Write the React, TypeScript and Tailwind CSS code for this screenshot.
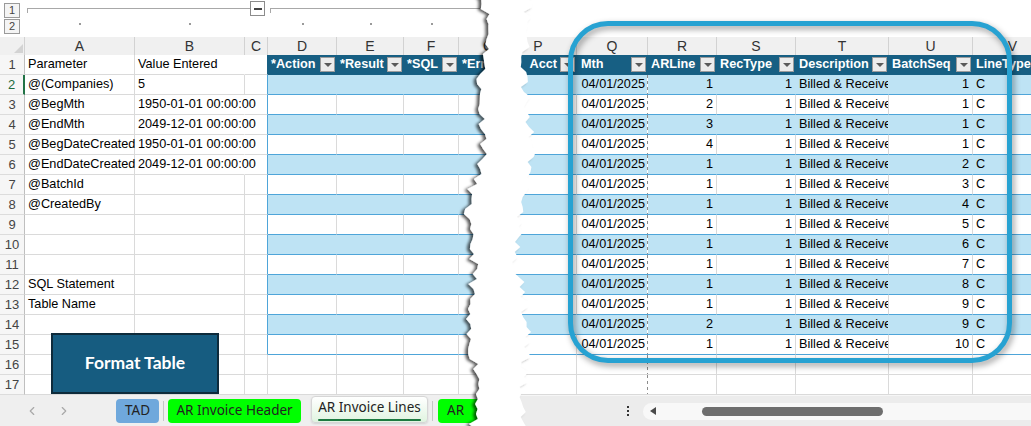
import { ChevronLeft, ChevronRight } from "lucide-react";

type Kind = "head" | "band" | "white" | "plain";

const BG: Record<Kind, string> = {
  head: "bg-[#175f83] text-white font-bold",
  band: "bg-[#bee3f4]",
  white: "bg-white",
  plain: "bg-white",
};
const BB: Record<Kind, string> = {
  head: "border-b-[#175f83]",
  band: "border-b-[#4ea5d9]",
  white: "border-b-[#4ea5d9]",
  plain: "border-b-[#dadada]",
};
const BR: Record<Kind, string> = {
  head: "border-r-[#175f83]",
  band: "border-r-[#bee3f4]",
  white: "border-r-[#dadada]",
  plain: "border-r-[#dadada]",
};

const ROWS = Array.from({ length: 17 }, (_, i) => i + 1);

function kindOf(n: number): Kind {
  if (n === 1) return "head";
  if (n > 15) return "plain";
  return n % 2 === 0 ? "band" : "white";
}

const LEFT_TEXT: Record<number, [string, string]> = {
  1: ["Parameter", "Value Entered"],
  2: ["@(Companies)", "5"],
  3: ["@BegMth", "1950-01-01 00:00:00"],
  4: ["@EndMth", "2049-12-01 00:00:00"],
  5: ["@BegDateCreated", "1950-01-01 00:00:00"],
  6: ["@EndDateCreated", "2049-12-01 00:00:00"],
  7: ["@BatchId", ""],
  8: ["@CreatedBy", ""],
  12: ["SQL Statement", ""],
  13: ["Table Name", ""],
};

const LEFT_TABLE = [
  { name: "*Action", w: "w-[69px]" },
  { name: "*Result", w: "w-[67px]" },
  { name: "*SQL", w: "w-[55px]" },
  { name: "*ErrMsg", w: "w-[60px]" },
];

// ARLine, BatchSeq for rows 2..15
const LINES: [number, number][] = [
  [1, 1], [2, 1], [3, 1], [4, 1], [1, 2], [1, 3], [1, 4],
  [1, 5], [1, 6], [1, 7], [1, 8], [1, 9], [2, 9], [1, 10],
];

// jagged torn-paper edge between the two screenshots
function rand(seed: number) {
  let s = seed;
  return () => {
    s = (s * 16807) % 2147483647;
    return s / 2147483647;
  };
}

const TEAR = (() => {
  const r = rand(11);
  const pts: string[] = [];
  for (let y = -6; y <= 432; y += 5) {
    const x = 482 - y * 0.03 + Math.sin(y / 19) * 5 + Math.sin(y / 53) * 5 + (r() - 0.5) * 9;
    pts.push(`${x.toFixed(1)},${y}`);
  }
  for (let y = 432; y >= -6; y -= 5) {
    const x = 525 + Math.sin(y / 27 + 2) * 5 + Math.sin(y / 61) * 4 + (r() - 0.5) * 11;
    pts.push(`${x.toFixed(1)},${y}`);
  }
  return pts.join(" ");
})();

function Filter() {
  return (
    <span className="mr-px w-[15px] h-[15px] shrink-0 bg-[#ececec] border border-[#9c9c9c] flex items-center justify-center">
      <span className="w-0 h-0 border-x-[4px] border-x-transparent border-t-[4px] border-t-[#5a5a5a]" />
    </span>
  );
}

function OutlineStrip() {
  const dots = ["w-[110px]", "w-[110px]", "w-[23px]", "w-[69px]", "w-[67px]", "w-[55px]", "w-[60px]"];
  return (
    <div className="h-[37px] shrink-0 flex">
      <div className="w-[25px] shrink-0 flex flex-col gap-px pt-[3px] pl-[4px]">
        {["1", "2"].map((l) => (
          <div key={l} className="w-[16px] h-[15px] border border-[#9a9a9a] bg-[#f4f4f4] text-[11px] leading-[13px] text-center text-[#444]">
            {l}
          </div>
        ))}
      </div>
      <div className="flex flex-col shrink-0">
        <div className="flex items-start pt-px h-[17px]">
          <div className="ml-[2px] mt-[7px] w-[223px] h-[5px] shrink-0 border-t border-l border-[#a8a8a8]" />
          <div className="w-[15px] h-[15px] shrink-0 border border-[#8c8c8c] flex items-center justify-center">
            <div className="w-[8px] h-[2px] bg-[#444]" />
          </div>
          <div className="ml-[5px] mt-[7px] w-[230px] h-[5px] shrink-0 border-t border-l border-[#a8a8a8]" />
        </div>
        <div className="flex mt-[6px]">
          {dots.map((w, i) => (
            <div key={i} className={`${w} shrink-0 flex justify-center`}>
              {i !== 2 && <div className="w-[2px] h-[2px] bg-[#9a9a9a]" />}
            </div>
          ))}
        </div>
      </div>
    </div>
  );
}

function LeftHeader() {
  const cols = [
    { l: "A", w: "w-[110px]" },
    { l: "B", w: "w-[110px]" },
    { l: "C", w: "w-[23px]" },
    { l: "D", w: "w-[69px]" },
    { l: "E", w: "w-[67px]" },
    { l: "F", w: "w-[55px]" },
    { l: "G", w: "w-[60px]" },
  ];
  return (
    <div className="h-[18px] shrink-0 flex bg-[#f0f0f0] text-[14px] text-[#333]">
      <div className="w-[25px] shrink-0 flex items-end justify-end pr-px pb-[2px] border-r border-[#d2d2d2]">
        <span className="w-0 h-0 border-l-[9px] border-l-transparent border-b-[9px] border-b-[#d3d3d3]" />
      </div>
      {cols.map((c) => (
        <div key={c.l} className={`${c.w} shrink-0 border-r border-[#d2d2d2] flex items-center justify-center`}>
          {c.l}
        </div>
      ))}
    </div>
  );
}

function LeftRow({ n }: { n: number }) {
  const k = kindOf(n);
  const [a, b] = LEFT_TEXT[n] ?? ["", ""];
  const long = b.length > 12;
  return (
    <div className="flex h-[20px] shrink-0 text-[12.7px] text-black">
      <div
        className={`w-[25px] shrink-0 flex items-center justify-center bg-[#f6f6f6] border-b border-b-[#dcdcdc] text-[13px] ${
          n === 2 ? "border-r-2 border-r-[#217346] text-[#1e6b3e]" : "border-r border-r-[#bfbfbf] text-[#444]"
        }`}
      >
        {n}
      </div>
      <div className="w-[110px] shrink-0 border-b border-r border-[#dadada] pl-[3px] flex items-center whitespace-nowrap">
        {a}
      </div>
      <div
        className={`w-[110px] shrink-0 border-b border-r border-b-[#dadada] ${
          long ? "border-r-transparent" : "border-r-[#dadada]"
        } pl-[3px] flex items-center whitespace-nowrap`}
      >
        {b}
      </div>
      <div
        className={`w-[23px] shrink-0 border-b border-r border-b-[#dadada] ${
          k === "plain" ? "border-r-[#dadada]" : k === "head" ? "border-r-[#175f83]" : "border-r-[#4ea5d9]"
        }`}
      />
      {LEFT_TABLE.map((c) => (
        <div
          key={c.name}
          className={`${c.w} shrink-0 border-b border-r ${BG[k]} ${BB[k]} ${BR[k]} flex items-center justify-between pl-[3px] whitespace-nowrap overflow-hidden`}
        >
          {k === "head" && (
            <>
              <span>{c.name}</span>
              <Filter />
            </>
          )}
        </div>
      ))}
    </div>
  );
}

function LeftTabs() {
  return (
    <div className="h-[31px] shrink-0 flex items-center bg-[#efefef] font-['Noto_Sans',sans-serif] text-[13.5px] text-[#222] whitespace-nowrap">
      <ChevronLeft size={14} className="ml-[25px] shrink-0 text-[#a8a8a8]" />
      <ChevronRight size={14} className="ml-[18px] shrink-0 text-[#a8a8a8]" />
      <div className="ml-[45px] w-[43px] h-[24px] shrink-0 rounded-[4px] bg-[#6fa8dc] flex items-center justify-center">TAD</div>
      <div className="ml-[4px] w-px h-[20px] shrink-0 bg-[#c6c6c6]" />
      <div className="ml-[4px] w-[133px] h-[24px] shrink-0 rounded-[4px] bg-[#00ff00] flex items-center justify-center">
        AR Invoice Header
      </div>
      <div className="ml-[10px] w-[117px] h-[27px] shrink-0 self-start mt-px rounded-[4px] border border-[#d6d6d6] bg-gradient-to-b from-white to-[#e0f4e0] flex flex-col items-center pt-[2px] shadow-[0_1px_2px_rgba(0,0,0,0.12)]">
        <span className="leading-[17px]">AR Invoice Lines</span>
        <div className="mt-[3px] w-[103px] h-[2px] rounded bg-[#1d7a40]" />
      </div>
      <div className="ml-[4px] w-px h-[20px] shrink-0 bg-[#c6c6c6]" />
      <div className="ml-[5px] w-[60px] h-[24px] shrink-0 rounded-[4px] bg-[#00ff00] flex items-center pl-[9px]">AR</div>
    </div>
  );
}

function RightHeader() {
  const cols = [
    { l: "P", w: "w-[77px]" },
    { l: "Q", w: "w-[71px]" },
    { l: "R", w: "w-[69px]" },
    { l: "S", w: "w-[79px]" },
    { l: "T", w: "w-[93px]" },
    { l: "U", w: "w-[84px]" },
    { l: "V", w: "w-[80px]" },
  ];
  return (
    <div className="h-[18px] shrink-0 flex bg-[#f0f0f0] text-[14px] text-[#333]">
      {cols.map((c) => (
        <div key={c.l} className={`${c.w} shrink-0 border-r border-[#d2d2d2] flex items-center justify-center`}>
          {c.l}
        </div>
      ))}
    </div>
  );
}

function RightRow({ n }: { n: number }) {
  const k = kindOf(n);
  const d = n >= 2 && n <= 15 ? LINES[n - 2] : null;
  const cell = `shrink-0 border-b border-r ${BG[k]} ${BB[k]} flex items-center whitespace-nowrap overflow-hidden`;
  const head = k === "head";
  return (
    <div className="flex h-[20px] shrink-0 text-[12.7px] text-black">
      <div className={`w-[77px] ${cell} ${BR[k]} justify-end gap-[3px]`}>
        {head && (
          <>
            <span>Acct</span>
            <Filter />
          </>
        )}
      </div>
      <div className={`w-[70px] shrink-0 border-b ${BG[k]} ${BB[k]} flex items-center whitespace-nowrap overflow-hidden ${head ? "justify-between pl-[4px]" : "justify-end pr-[2px]"}`}>
        {head ? (
          <>
            <span>Mth</span>
            <Filter />
          </>
        ) : (
          d && "04/01/2025"
        )}
      </div>
      <div
        className={`w-px shrink-0 border-b ${BB[k]} ${
          head ? "bg-[#175f83]" : "bg-[repeating-linear-gradient(to_bottom,#8c8c8c_0_3px,transparent_3px_6px)]"
        }`}
      />
      <div className={`w-[69px] ${cell} ${BR[k]} ${head ? "justify-between pl-[3px]" : "justify-end pr-[3px]"}`}>
        {head ? (
          <>
            <span>ARLine</span>
            <Filter />
          </>
        ) : (
          d && d[0]
        )}
      </div>
      <div className={`w-[79px] ${cell} ${BR[k]} ${head ? "justify-between pl-[3px]" : "justify-end pr-[3px]"}`}>
        {head ? (
          <>
            <span>RecType</span>
            <Filter />
          </>
        ) : (
          d && 1
        )}
      </div>
      <div className={`w-[93px] ${cell} ${BR[k]} ${head ? "justify-between" : ""} pl-[3px]`}>
        {head ? (
          <>
            <span>Description</span>
            <Filter />
          </>
        ) : (
          d && "Billed & Received"
        )}
      </div>
      <div className={`w-[84px] ${cell} ${BR[k]} ${head ? "justify-between pl-[3px]" : "justify-end pr-[3px]"}`}>
        {head ? (
          <>
            <span>BatchSeq</span>
            <Filter />
          </>
        ) : (
          d && d[1]
        )}
      </div>
      <div className={`w-[80px] ${cell} ${BR[k]} pl-[3px]`}>{head ? "LineType" : d && "C"}</div>
    </div>
  );
}

function RightBar() {
  return (
    <div className="h-[31px] shrink-0 flex items-center bg-[#ececec] border-t border-[#f6f6f6]">
      <div className="ml-[127px] flex flex-col gap-[2px]">
        <div className="w-[2px] h-[2px] bg-[#333]" />
        <div className="w-[2px] h-[2px] bg-[#333]" />
        <div className="w-[2px] h-[2px] bg-[#333]" />
      </div>
      <div className="ml-[14px] flex-1 h-[17px] rounded-l-full bg-[#f8f8f8] flex items-center">
        <span className="ml-[7px] w-0 h-0 border-y-[4px] border-y-transparent border-r-[6px] border-r-[#4a4a4a]" />
        <div className="ml-[46px] w-[181px] h-[9px] rounded-full bg-[#6e6e6e]" />
      </div>
    </div>
  );
}

export default function App() {
  return (
    <div className="relative w-[1031px] h-[426px] overflow-hidden bg-white flex font-['Liberation_Sans',Arial,sans-serif]">
      <div className="relative w-[500px] shrink-0 overflow-hidden flex flex-col">
        <OutlineStrip />
        <LeftHeader />
        {ROWS.map((n) => (
          <LeftRow key={n} n={n} />
        ))}
        <LeftTabs />
        <div className="absolute left-[51px] top-[333px] w-[168px] h-[61px] bg-[#165c80] border-2 border-[#0e2b3b] flex items-center justify-center">
          <span className="font-['Lato',sans-serif] font-bold text-[17.5px] text-white">Format Table</span>
        </div>
      </div>

      <div className="flex-1 overflow-hidden flex flex-col">
        <div className="h-[37px] shrink-0" />
        <RightHeader />
        {ROWS.map((n) => (
          <RightRow key={n} n={n} />
        ))}
        <RightBar />
      </div>

      <svg className="absolute left-0 top-0 pointer-events-none" width={1031} height={426}>
        <defs>
          <filter id="tear-shadow" x="-30%" y="-5%" width="160%" height="110%">
            <feDropShadow dx="-3" dy="1" stdDeviation="1.8" floodColor="#000" floodOpacity="0.65" />
          </filter>
        </defs>
        <polygon points={TEAR} fill="#fff" filter="url(#tear-shadow)" />
      </svg>

      <div className="absolute left-[568px] top-[21px] w-[444px] h-[342px] rounded-[40px] border-[5px] border-[#27a2d2] [filter:drop-shadow(2px_3px_3px_rgba(0,0,0,0.4))] pointer-events-none" />
    </div>
  );
}
